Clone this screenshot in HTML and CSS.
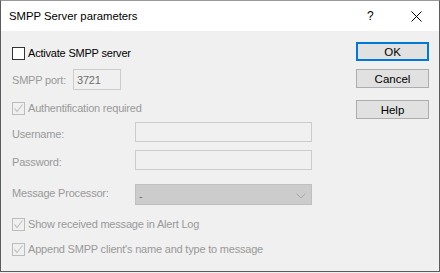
FILE: index.html
```html
<!DOCTYPE html>
<html>
<head>
<meta charset="utf-8">
<link rel="stylesheet" href="styles.css">
</head>
<body>
<div class="window">
  <div class="titlebar">
    <span class="title">SMPP Server parameters</span>
    <span class="help-q">?</span>
    <span class="close">
      <svg width="11" height="11" viewBox="0 0 11 11"><path d="M0.5 0.5 L10.5 10.5 M10.5 0.5 L0.5 10.5" stroke="#000" stroke-width="1" fill="none"/></svg>
    </span>
  </div>
  <div class="body">
    <div class="form">
      <label class="row chk-row r1">
        <span class="box"></span>
        <span class="txt">Activate SMPP server</span>
      </label>
      <div class="row r2">
        <span class="dis lbl-port">SMPP port:</span>
        <span class="field port">3721</span>
      </div>
      <label class="row chk-row r3">
        <span class="box disabled">
          <svg width="11" height="11" viewBox="0 0 11 11"><path d="M1.5 5.5 L4 8.5 L9.5 1.5" stroke="#c4c4c4" stroke-width="1.2" fill="none"/></svg>
        </span>
        <span class="txt dis">Authentification required</span>
      </label>
      <div class="row r4">
        <span class="dis lbl">Username:</span>
        <span class="field wide"></span>
      </div>
      <div class="row r5">
        <span class="dis lbl">Password:</span>
        <span class="field wide"></span>
      </div>
      <div class="row r6">
        <span class="dis lbl lbl-mp">Message Processor:</span>
        <span class="combo">
          <span class="combo-val">-</span>
          <svg class="chev" width="10" height="6" viewBox="0 0 10 6"><path d="M0.5 0.5 L5 5 L9.5 0.5" stroke="#a8a8a8" stroke-width="1" fill="none"/></svg>
        </span>
      </div>
      <label class="row chk-row r7">
        <span class="box disabled">
          <svg width="11" height="11" viewBox="0 0 11 11"><path d="M1.5 5.5 L4 8.5 L9.5 1.5" stroke="#c4c4c4" stroke-width="1.2" fill="none"/></svg>
        </span>
        <span class="txt dis">Show received message in Alert Log</span>
      </label>
      <label class="row chk-row r8">
        <span class="box disabled">
          <svg width="11" height="11" viewBox="0 0 11 11"><path d="M1.5 5.5 L4 8.5 L9.5 1.5" stroke="#c4c4c4" stroke-width="1.2" fill="none"/></svg>
        </span>
        <span class="txt dis">Append SMPP client's name and type to message</span>
      </label>
    </div>
    <div class="buttons">
      <button class="btn default">OK</button>
      <button class="btn cancel">Cancel</button>
      <button class="btn help">Help</button>
    </div>
  </div>
</div>
</body>
</html>
```
FILE: styles.css
```css
html, body {
  margin: 0;
  padding: 0;
  background: #f0f0f0;
}
body {
  font-family: "Liberation Sans", Arial, sans-serif;
  font-size: 11px;
  letter-spacing: -0.2px;
  color: #000;
}
.window {
  width: 438px;
  height: 270px;
  border: 1px solid #5c5c5c;
  border-top-color: #9a9a9a;
  background: #f0f0f0;
  display: flex;
  flex-direction: column;
}
.titlebar {
  height: 30px;
  background: #fff;
  display: flex;
  align-items: center;
  padding-left: 8px;
}
.title {
  font-size: 11.3px;
  letter-spacing: 0;
  flex: 1;
  padding-bottom: 1px;
}
.help-q {
  font-size: 12px;
  width: 10px;
  margin-right: 34px;
  padding-bottom: 1px;
}
.close {
  width: 11px;
  height: 11px;
  margin-right: 17px;
  display: flex;
}
.body {
  flex: 1;
  display: flex;
}
.form {
  flex: 1;
  display: flex;
  flex-direction: column;
  padding-left: 11px;
}
.row {
  display: flex;
  align-items: center;
}
.chk-row { height: 13px; }
.box {
  width: 11px;
  height: 11px;
  border: 1px solid #333;
  background: #fff;
  display: flex;
  margin-right: 3px;
}
.box.disabled {
  border-color: #bcbcbc;
  background: #f0f0f0;
}
.txt { line-height: 13px; }
.dis { color: #999999; }
.r1 { margin-top: 16px; }
.r2 { margin-top: 9px; }
.r3 { margin-top: 12px; }
.r4 { margin-top: 7px; }
.r5 { margin-top: 8px; }
.r6 { margin-top: 14px; }
.r7 { margin-top: 13px; }
.r8 { margin-top: 12px; }
.lbl-port { width: 61px; }
.lbl { width: 123px; padding-top: 3px; }
.lbl-mp { padding-top: 0; padding-bottom: 3px; }
.field {
  box-sizing: border-box;
  height: 21px;
  border: 1px solid #cccccc;
  background: #f0f0f0;
  display: flex;
  align-items: center;
  padding-left: 3px;
  color: #6d6d6d;
}
.port { width: 48px; }
.wide { width: 177px; height: 20px; }
.combo {
  box-sizing: border-box;
  width: 177px;
  height: 21px;
  background: #cccccc;
  border: 1px solid #bfbfbf;
  display: flex;
  align-items: center;
  padding-left: 3px;
  padding-right: 5px;
  color: #6d6d6d;
}
.combo-val { flex: 1; padding-top: 2px; }
.chev { margin-top: 2px; }
.buttons {
  width: 73px;
  margin-right: 10px;
  padding-top: 11px;
  display: flex;
  flex-direction: column;
}
.btn {
  box-sizing: border-box;
  width: 73px;
  height: 19px;
  margin: 0;
  padding: 0;
  background: #e1e1e1;
  border: 1px solid #adadad;
  font-family: "Liberation Sans", Arial, sans-serif;
  font-size: 11.5px;
  letter-spacing: 0;
  color: #000;
}
.btn.default {
  border: 2px solid #0078d7;
}
.cancel { margin-top: 8px; }
.help { margin-top: 12px; }
```
